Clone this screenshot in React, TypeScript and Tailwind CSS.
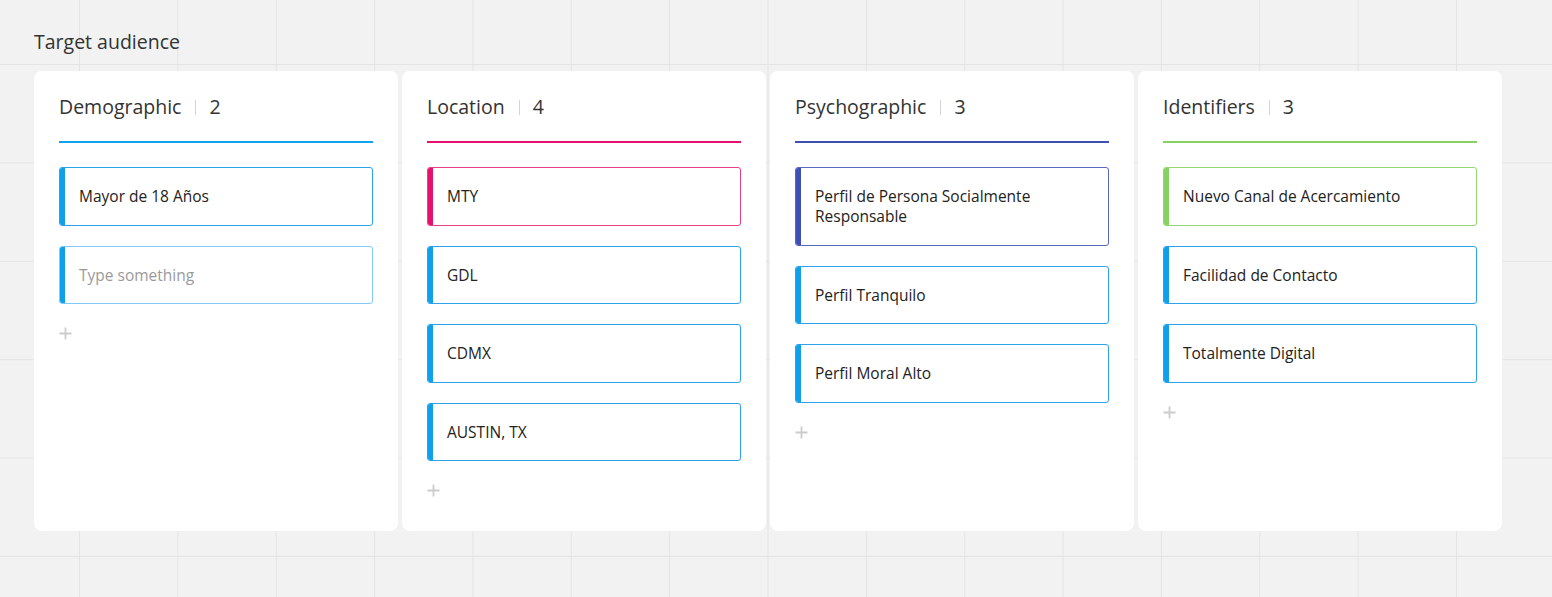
import React from 'react';

type Column = {
	title: string;
	line: string;
	items: { text: string; bar: string; border: string; placeholder?: boolean }[];
};

const BLUE = { bar: 'bg-[#0fa0ea]', border: 'border-[#2ba4ec]' };

const columns: Column[] = [
	{
		title: 'Demographic',
		line: 'bg-[#12a1ec]',
		items: [
			{ text: 'Mayor de 18 Años', ...BLUE },
			{ text: 'Type something', bar: 'bg-[#0fa0ea]', border: 'border-[#7fcbf6]', placeholder: true },
		],
	},
	{
		title: 'Location',
		line: 'bg-[#e6106e]',
		items: [
			{ text: 'MTY', bar: 'bg-[#e6106e]', border: 'border-[#ea3f86]' },
			{ text: 'GDL', ...BLUE },
			{ text: 'CDMX', ...BLUE },
			{ text: 'AUSTIN, TX', ...BLUE },
		],
	},
	{
		title: 'Psychographic',
		line: 'bg-[#3f4fb3]',
		items: [
			{ text: 'Perfil de Persona Socialmente Responsable', bar: 'bg-[#3f4fb3]', border: 'border-[#5a67bf]' },
			{ text: 'Perfil Tranquilo', ...BLUE },
			{ text: 'Perfil Moral Alto', ...BLUE },
		],
	},
	{
		title: 'Identifiers',
		line: 'bg-[#86d163]',
		items: [
			{ text: 'Nuevo Canal de Acercamiento', bar: 'bg-[#86d163]', border: 'border-[#93d672]' },
			{ text: 'Facilidad de Contacto', ...BLUE },
			{ text: 'Totalmente Digital', ...BLUE },
		],
	},
];

const Plus = () => (
	<svg width="13" height="13" viewBox="0 0 13 13" className="block">
		<path d="M6.5 0.5v12M0.5 6.5h12" stroke="#cccccc" strokeWidth="1.8" />
	</svg>
);

const ColumnCard: React.FunctionComponent<{ col: Column }> = ({ col }) => (
	<div className="flex h-[460px] w-[364px] flex-col rounded-lg bg-white px-[25px] pt-[22px]">
		<div className="flex h-[28px] items-center text-[19.5px] text-[#333]">
			<span>{col.title}</span>
			<span className="ml-[14px] mr-[13px] h-[15px] w-px bg-[#d4d4d4]" />
			<span>{col.items.length}</span>
		</div>
		<div className={`mt-[20px] h-[2px] w-full ${col.line}`} />
		<div className="mt-[24px] flex flex-col gap-[20px]">
			{col.items.map(item => (
				<div
					key={item.text}
					className={`flex overflow-hidden rounded-[3px] border ${item.border} bg-white`}
				>
					<div className={`w-[5px] shrink-0 ${item.bar}`} />
					<div
						className={`py-[18.3px] pl-[14px] pr-[40px] text-[15.5px] leading-[20px] ${
							item.placeholder ? 'text-[#9a9a9a]' : 'text-[#222]'
						}`}
					>
						{item.text}
					</div>
				</div>
			))}
		</div>
		<div className="mt-[23px]">
			<Plus />
		</div>
	</div>
);

export default function App() {
	return (
		<div
			className="h-[597px] w-[1552px] bg-[#f2f2f2] bg-[linear-gradient(to_right,#e4e4e4_1px,transparent_1px),linear-gradient(to_bottom,#e4e4e4_1px,transparent_1px)] bg-[size:98.36px_98.4px] bg-[position:-19.4px_-34.4px] pl-[34px] pt-[29px]"
			style={{ fontFamily: '"Open Sans", "Noto Sans", sans-serif' }}
		>
			<div className="h-[26px] text-[19.5px] leading-[26px] text-[#333]">Target audience</div>
			<div className="mt-[16px] flex gap-[4px]">
				{columns.map(col => (
					<ColumnCard key={col.title} col={col} />
				))}
			</div>
		</div>
	);
}
